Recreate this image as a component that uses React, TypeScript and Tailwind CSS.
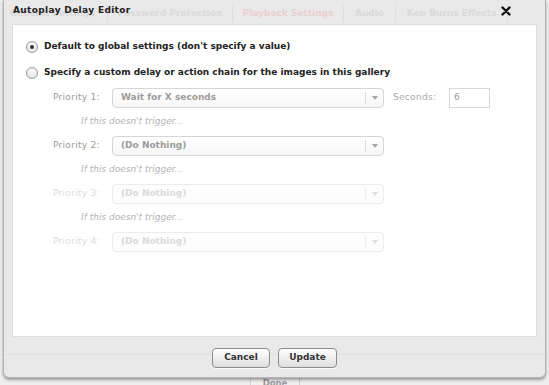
import React from "react";

const font = { fontFamily: '"DejaVu Sans", Verdana, sans-serif' };

function Radio({ checked }: { checked?: boolean }) {
  return (
    <span className="w-[12px] h-[12px] rounded-full border border-[#9a9a9a] bg-gradient-to-b from-white to-[#e4e4e4] flex items-center justify-center shrink-0 shadow-[inset_0_1px_1px_rgba(0,0,0,0.1)]">
      {checked && <span className="w-[4px] h-[4px] rounded-full bg-[#333]" />}
    </span>
  );
}

function Select({ text, faded }: { text: string; faded?: boolean }) {
  return (
    <div
      className={`w-[272px] h-[20px] rounded-[4px] border flex items-center ${
        faded ? "border-[#ececec] bg-[#fdfdfd]" : "border-[#d6d6d6] bg-gradient-to-b from-white to-[#f6f6f6]"
      }`}
    >
      <span
        className={`flex-1 pl-[8px] text-[9px] font-bold ${faded ? "text-[#dadada]" : "text-[#9c9c9c]"}`}
      >
        {text}
      </span>
      <span className={`w-px h-[12px] ${faded ? "bg-[#eeeeee]" : "bg-[#dcdcdc]"}`} />
      <span className="w-[17px] flex justify-center">
        <svg width="6" height="4" viewBox="0 0 6 4">
          <path d="M0 0 L6 0 L3 4 Z" fill={faded ? "#dddddd" : "#a8a8a8"} />
        </svg>
      </span>
    </div>
  );
}

function PriorityRow({ n, text, faded, children }: { n: number; text: string; faded?: boolean; children?: React.ReactNode }) {
  return (
    <div className="flex items-center h-[20px]">
      <span className={`w-[59px] text-[9px] tracking-[0.3px] ${faded ? "text-[#dcdcdc]" : "text-[#9a9a9a]"}`}>
        Priority {n}:
      </span>
      <Select text={text} faded={faded} />
      {children}
    </div>
  );
}

function Trigger() {
  return (
    <div className="pl-[28px] h-[28px] flex items-center text-[9px] italic text-[#b4b4b4]">
      If this doesn&apos;t trigger...
    </div>
  );
}

function Button({ label, w }: { label: string; w: string }) {
  return (
    <button
      className={`${w} h-[20px] rounded-[4px] border border-[#8c8c8c] bg-gradient-to-b from-white to-[#dedede] text-[9px] font-bold text-[#333] shadow-[0_1px_0_rgba(255,255,255,0.8)]`}
    >
      {label}
    </button>
  );
}

function Sep() {
  return <span className="w-px h-[16px] bg-[#dcdcdc] shrink-0" />;
}

export default function App() {
  return (
    <div className="w-[549px] h-[385px] bg-[#eeeeee] relative overflow-hidden" style={font}>
      {/* background done button */}
      <div className="absolute left-[250px] top-[376px] w-[50px] h-[14px] border border-[#cfcfcf] bg-[#efefef] text-[8.5px] font-bold text-[#9a9a9a] flex justify-center">
        Done
      </div>

      {/* dialog */}
      <div className="absolute left-[3px] top-0 w-[543px] h-[378px] rounded-b-[6px] border-x border-b border-[#b4b4b4] bg-[#e9e9e9] shadow-[0_2px_3px_rgba(0,0,0,0.35)] flex flex-col">
        <div className="h-[21px] relative flex items-center justify-between pl-[9px] pr-[34px]">
          {/* ghosted tabs of the page behind */}
          <div className="absolute left-0 top-[5px] h-[18px] flex items-center whitespace-nowrap text-[9px] font-bold text-[#dadada]">
            <span className="w-[103px] shrink-0 overflow-hidden flex justify-end pr-[12px]">General Settings</span>
            <Sep />
            <span className="w-[124px] shrink-0 text-center">Password Protection</span>
            <Sep />
            <span className="w-[110px] shrink-0 text-center text-[#ead0d0]">Playback Settings</span>
            <Sep />
            <span className="w-[51px] shrink-0 text-center">Audio</span>
            <Sep />
            <span className="w-[111px] shrink-0 text-center">Ken Burns Effects</span>
            <Sep />
          </div>
          <span className="relative text-[9px] font-bold text-[#222] tracking-[0.35px]">Autoplay Delay Editor</span>
          <svg className="relative" width="10" height="10" viewBox="0 0 10 10">
            <path d="M1.5 1.5 L8.5 8.5 M8.5 1.5 L1.5 8.5" stroke="#111" strokeWidth="2.4" strokeLinecap="round" />
          </svg>
        </div>
        <div className="relative ml-[8px] mr-[8px] mt-[3px] h-[313px] bg-white border border-[#dcdcdc] pt-[13px] pl-[13px]">
          <div className="flex items-center gap-[6px] h-[18px] text-[9px] font-bold text-[#222]">
            <Radio checked />
            <span>Default to global settings (don&apos;t specify a value)</span>
          </div>
          <div className="flex items-center gap-[6px] h-[18px] mt-[8px] text-[9px] font-bold text-[#222]">
            <Radio />
            <span>Specify a custom delay or action chain for the images in this gallery</span>
          </div>
          <div className="pl-[27px] mt-[6px]">
            <PriorityRow n={1} text="Wait for X seconds">
              <span className="ml-[9px] w-[56px] text-[9px] text-[#a8a8a8] tracking-[0.3px]">Seconds:</span>
              <div className="w-[41px] h-[20px] border border-[#d8d8d8] text-[9px] text-[#999] pl-[4px] flex items-center">
                6
              </div>
            </PriorityRow>
            <Trigger />
            <PriorityRow n={2} text="(Do Nothing)" />
            <Trigger />
            <PriorityRow n={3} text="(Do Nothing)" faded />
            <Trigger />
            <PriorityRow n={4} text="(Do Nothing)" faded />
          </div>
        </div>
        <div className="h-[18px] border-b border-[#e0e0e0] flex justify-center items-end">
          <div className="translate-y-[14px] flex gap-[8px]">
            <Button label="Cancel" w="w-[58px]" />
            <Button label="Update" w="w-[59px]" />
          </div>
        </div>
      </div>
    </div>
  );
}
